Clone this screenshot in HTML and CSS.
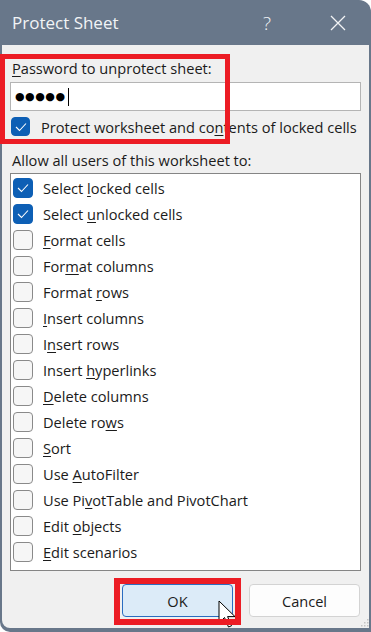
FILE: index.html
```html
<!DOCTYPE html>
<html lang="en">
<head>
    <meta charset="UTF-8">
    <meta name="viewport" content="width=device-width, initial-scale=1.0">
    <title>Protect Sheet</title>
    <link rel="stylesheet" href="styles.css">
</head>
<body>
    <div class="dialog">
        <div class="titlebar">
            <span class="title">Protect Sheet</span>
            <span class="help">?</span>
            <span class="close">
                <svg width="16" height="16" viewBox="0 0 16 16"><path d="M1 1 L15 15 M15 1 L1 15" stroke="#f2f4f6" stroke-width="1.3" fill="none"/></svg>
            </span>
        </div>

        <div class="content">
            <div class="field-label"><u>P</u>assword to unprotect sheet:</div>
            <div class="password-box">
                <span class="dots">●●●●●</span><span class="caret"></span>
            </div>
            <div class="check-row top-check">
                <span class="box checked">
                    <svg width="12" height="10" viewBox="0 0 12 10"><path d="M1 5 L4.5 8.5 L11 1.5" stroke="#fff" stroke-width="1.1" fill="none"/></svg>
                </span>
                <span class="check-text">Protect worksheet and co<u>n</u>tents of locked cells</span>
            </div>

            <div class="field-label allow-label">Allow all users of this worksheet to:</div>

            <div class="perm-list" id="perm-list"></div>

            <div class="buttons">
                <button class="btn btn-ok">OK</button>
                <button class="btn btn-cancel">Cancel</button>
            </div>

            <svg class="grip" width="9" height="9" viewBox="0 0 9 9">
                <rect x="7" y="1" width="1.5" height="1.5" fill="#c4c4c4"/>
                <rect x="4" y="4" width="1.5" height="1.5" fill="#c4c4c4"/>
                <rect x="7" y="4" width="1.5" height="1.5" fill="#c4c4c4"/>
                <rect x="1" y="7" width="1.5" height="1.5" fill="#c4c4c4"/>
                <rect x="4" y="7" width="1.5" height="1.5" fill="#c4c4c4"/>
                <rect x="7" y="7" width="1.5" height="1.5" fill="#c4c4c4"/>
            </svg>
        </div>

        <svg class="pointer" width="20" height="30" viewBox="0 0 20 30">
            <path d="M1 1 L1 23 L6.5 17.5 L10.5 27 L13.5 25.8 L9.6 16.6 L17 16.6 Z" fill="#fff" stroke="#000" stroke-width="1"/>
        </svg>

        <div class="mark mark-password"></div>
        <div class="mark mark-ok"></div>
    </div>

    <script>
        const permissions = [
            { label: 'Select <u>l</u>ocked cells', checked: true },
            { label: 'Select <u>u</u>nlocked cells', checked: true },
            { label: '<u>F</u>ormat cells' },
            { label: 'For<u>m</u>at columns' },
            { label: 'Format <u>r</u>ows' },
            { label: '<u>I</u>nsert columns' },
            { label: 'I<u>n</u>sert rows' },
            { label: 'Insert <u>h</u>yperlinks' },
            { label: '<u>D</u>elete columns' },
            { label: 'Delete ro<u>w</u>s' },
            { label: '<u>S</u>ort' },
            { label: 'Use <u>A</u>utoFilter' },
            { label: 'Use Pi<u>v</u>otTable and PivotChart' },
            { label: 'Edit <u>o</u>bjects' },
            { label: '<u>E</u>dit scenarios' }
        ];

        const tick = '<svg width="12" height="10" viewBox="0 0 12 10"><path d="M1 5 L4.5 8.5 L11 1.5" stroke="#fff" stroke-width="1.1" fill="none"/></svg>';
        const list = document.getElementById('perm-list');

        permissions.forEach(item => {
            const row = document.createElement('div');
            row.className = 'check-row list-row';
            row.innerHTML = `
                <span class="box ${item.checked ? 'checked' : ''}">${item.checked ? tick : ''}</span>
                <span class="check-text">${item.label}</span>
            `;
            list.appendChild(row);
        });
    </script>
</body>
</html>
```

FILE: styles.css
```css
body {
    margin: 0;
    padding: 0;
    font-family: "Open Sans", "Noto Sans", sans-serif;
    color: #1b1b1b;
    background: #fff;
}

.dialog {
    position: relative;
    width: 371px;
    height: 632px;
    box-sizing: border-box;
    background-color: #68778a;
    border-top-right-radius: 12px;
    border-bottom-left-radius: 10px;
    padding: 0 2px 4px 2px;
    display: flex;
    flex-direction: column;
    overflow: hidden;
}

.titlebar {
    height: 45px;
    display: flex;
    align-items: center;
    color: #f2f4f6;
    flex-shrink: 0;
}

.title {
    font-size: 17px;
    margin-left: 10px;
    flex: 1;
}

.help {
    font-size: 19px;
    font-weight: 300;
    width: 14px;
    margin-right: 53px;
}

.close {
    display: flex;
    margin-right: 23px;
}

.content {
    position: relative;
    flex: 1;
    background-color: #f0f0f0;
    border-bottom-left-radius: 8px;
    padding: 0 8px;
    font-size: 14.6px;
}

.field-label {
    height: 20px;
    line-height: 20px;
    margin-top: 13px;
    padding-left: 2px;
}

.password-box {
    margin-top: 4px;
    height: 29px;
    box-sizing: border-box;
    background: #fff;
    border: 1px solid #b4b4b4;
    display: flex;
    align-items: center;
    padding-left: 4px;
}

.dots {
    font-family: "DejaVu Sans", sans-serif;
    font-size: 11px;
    letter-spacing: 0.5px;
    color: #000;
}

.caret {
    width: 1px;
    height: 18px;
    background: #000;
    margin-left: 2px;
}

.check-row {
    display: flex;
    align-items: center;
}

.top-check {
    margin-top: 6px;
    height: 19px;
}

.top-check .box {
    width: 19px;
    height: 19px;
    margin-left: 1px;
}

.top-check .check-text {
    margin-left: 11px;
}

.allow-label {
    margin-top: 14px;
}

.perm-list {
    margin-top: 3px;
    height: 398px;
    box-sizing: border-box;
    background: #fff;
    border: 1px solid #858585;
    padding-top: 1px;
}

.list-row {
    height: 26px;
}

.box {
    width: 20px;
    height: 20px;
    box-sizing: border-box;
    border: 1px solid #8a8a8a;
    border-radius: 4px;
    background: #f6f6f6;
    margin-left: 2px;
    display: flex;
    align-items: center;
    justify-content: center;
    flex-shrink: 0;
}

.box.checked {
    background: #0d5fb5;
    border-color: #0d5fb5;
}

.list-row .check-text {
    margin-left: 10px;
}

u {
    text-decoration-thickness: 1px;
    text-underline-offset: 2px;
}

.buttons {
    display: flex;
    justify-content: flex-end;
    gap: 16px;
    margin-top: 13px;
    padding-right: 1px;
}

.btn {
    height: 33px;
    font-family: inherit;
    font-size: 14.6px;
    color: #1b1b1b;
    border-radius: 4px;
    cursor: pointer;
}

.btn-ok {
    width: 111px;
    background: #dcebf8;
    border: 1px solid #2a6cc0;
}

.btn-cancel {
    width: 111px;
    background: #fdfdfd;
    border: 1px solid #d3d3d3;
}

.grip {
    position: absolute;
    right: 0;
    bottom: 1px;
}

.pointer {
    position: absolute;
    left: 218px;
    top: 600px;
}

.mark {
    position: absolute;
    border: 5px solid #ec1c24;
    box-sizing: border-box;
}

.mark-password {
    left: 0;
    top: 54px;
    width: 230px;
    height: 90px;
}

.mark-ok {
    left: 114px;
    top: 578px;
    width: 127px;
    height: 47px;
    border-width: 6px;
}
```
